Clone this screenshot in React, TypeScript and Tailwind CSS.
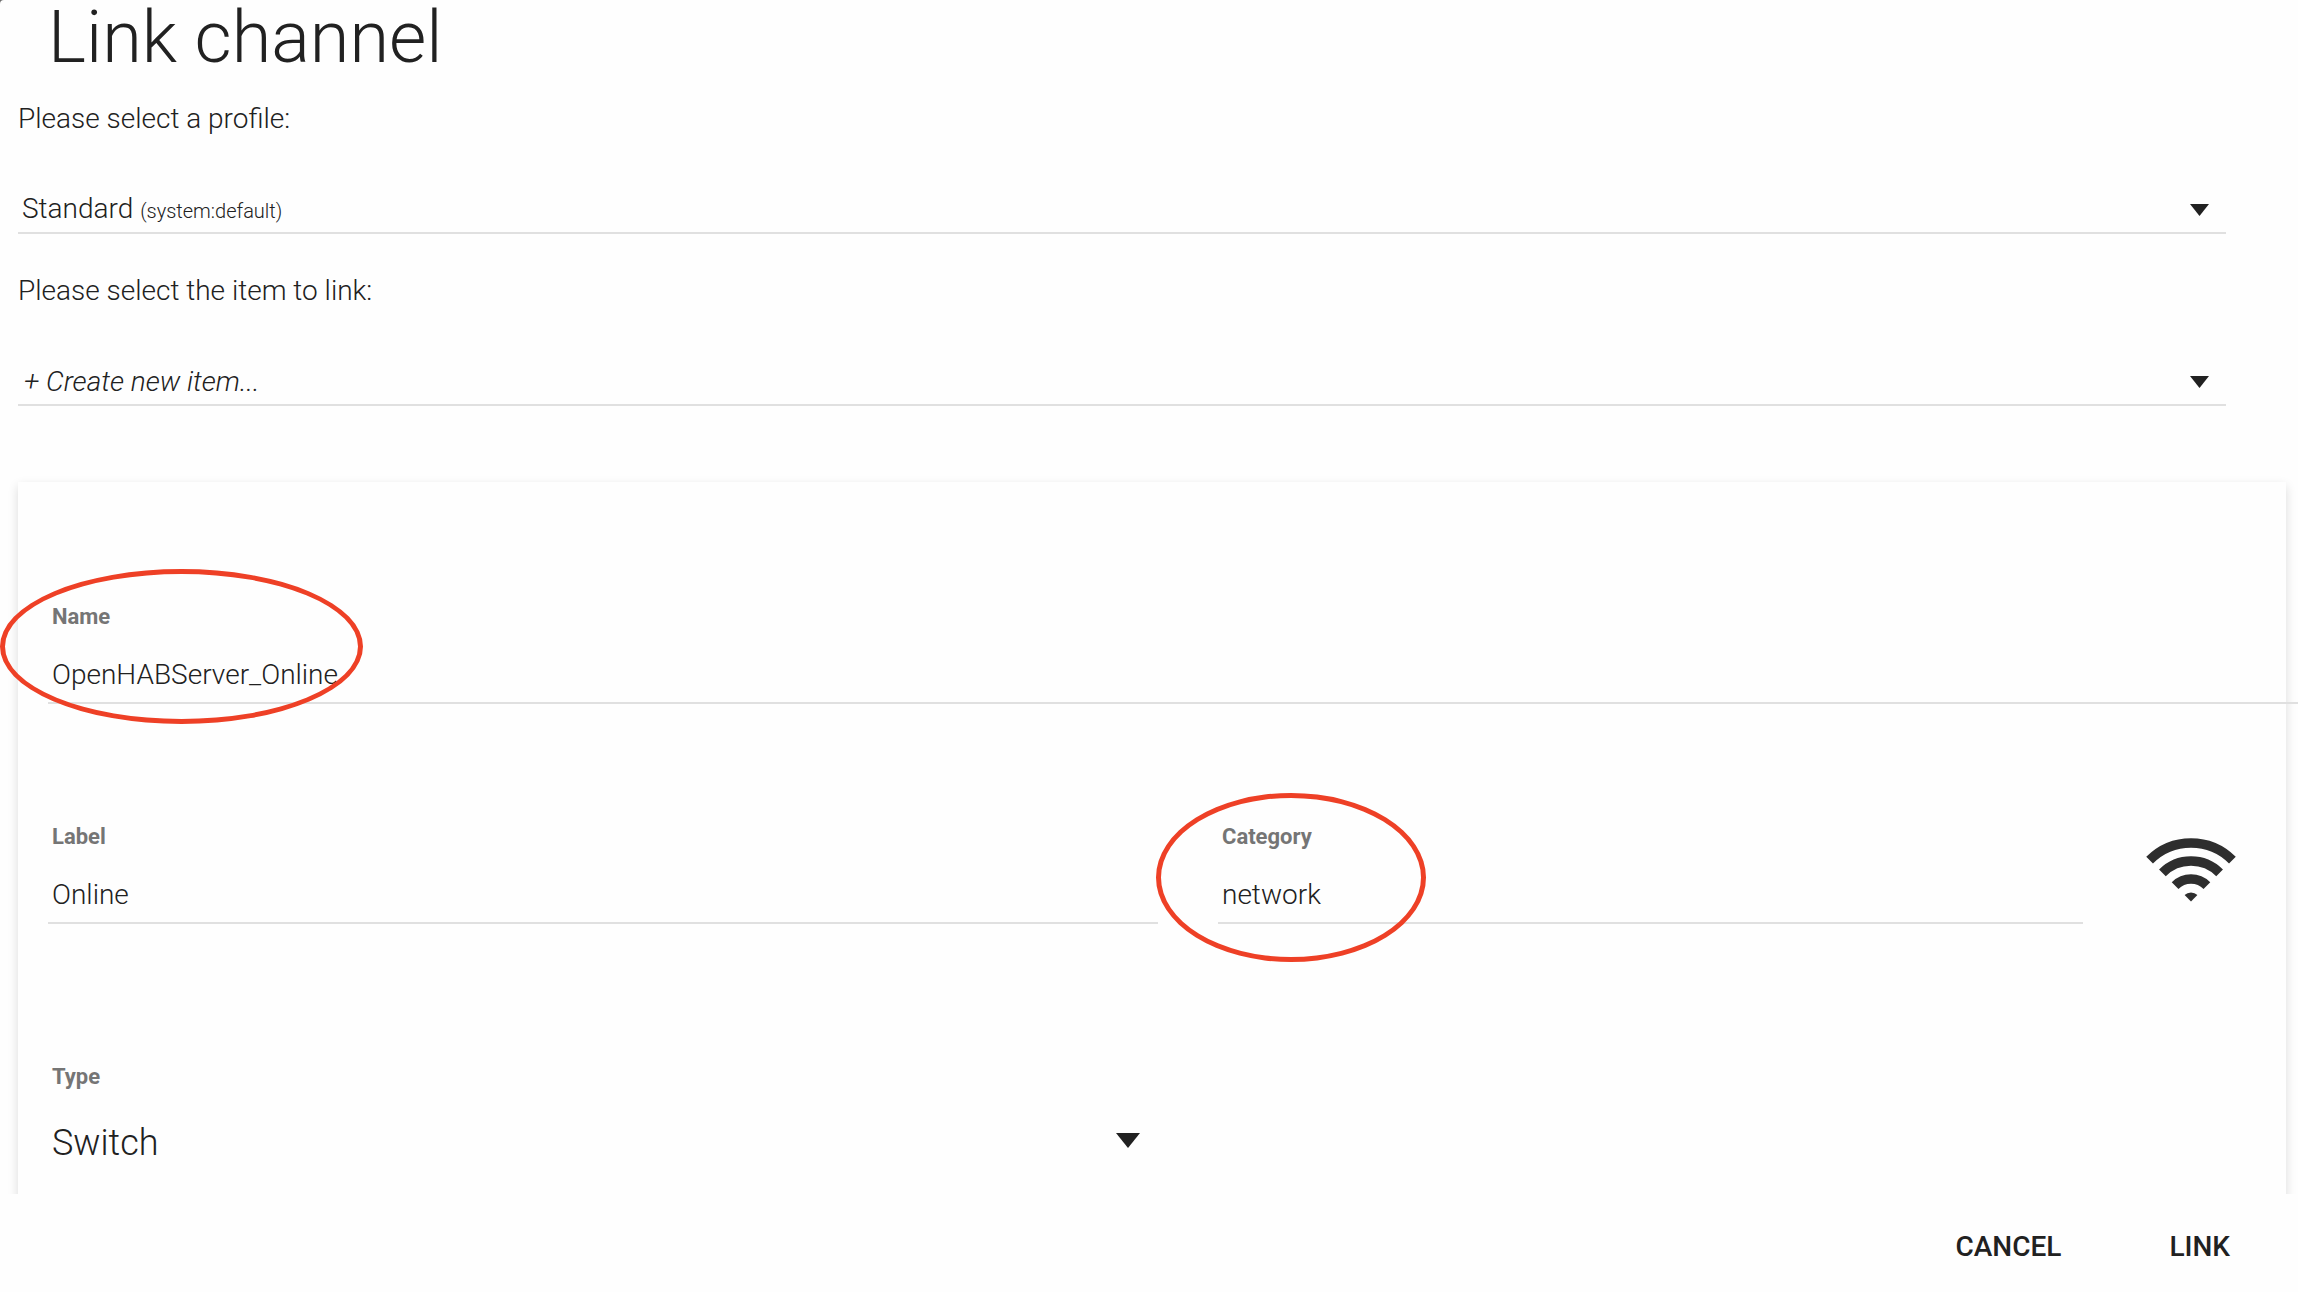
import React, { useState } from "react";
import clsx from "clsx";

const PROFILES = [
  { id: "system:default", label: "Standard" },
  { id: "system:follow", label: "Follow" },
  { id: "system:offset", label: "Offset" },
];

const ITEM_TYPES = ["Switch", "Contact", "String", "Number", "Dimmer"];

const Caret: React.FC<{ className?: string }> = ({ className }) => (
  <svg viewBox="0 0 24 15" aria-hidden="true" className={clsx("pointer-events-none", className)}>
    <path d="M0 0h24L12 15z" fill="#212121" />
  </svg>
);

const NetworkIcon = () => (
  <svg viewBox="0 0 90 64" aria-hidden="true" className="h-16 w-[90px]">
    <g fill="none" stroke="#2e2e2e" strokeWidth="9.5">
      <path d="M3.6 22.1A58.5 58.5 0 0 1 86.4 22.1" />
      <path d="M16.4 34.9A40.5 40.5 0 0 1 73.6 34.9" />
      <path d="M29.1 47.6A22.5 22.5 0 0 1 60.9 47.6" />
    </g>
    <path d="M45 63.5L38.6 57.1A9 9 0 0 1 51.4 57.1z" fill="#2e2e2e" />
  </svg>
);

// Hand-drawn style marker around a field
const Marker: React.FC<{ className: string }> = ({ className }) => (
  <div
    className={clsx(
      "pointer-events-none absolute rounded-[50%] border-5 border-[#ee4026]",
      className
    )}
  />
);

interface TextFieldProps {
  id: string;
  label: string;
  value: string;
  onChange: (value: string) => void;
  children?: React.ReactNode;
}

const TextField: React.FC<TextFieldProps> = ({ id, label, value, onChange, children }) => (
  <div className="relative">
    <label htmlFor={id} className="block pl-1 text-[22px] leading-[30px] font-bold text-[#757575]">
      {label}
    </label>
    <input
      id={id}
      type="text"
      value={value}
      onChange={(e) => onChange(e.target.value)}
      className="mt-3.5 block h-[58px] w-full border-b-2 border-[#e0e0e0] bg-transparent pl-1 text-[28px] font-light outline-none"
    />
    {children}
  </div>
);

const App: React.FC = () => {
  const [profile, setProfile] = useState(PROFILES[0].id);
  const [name, setName] = useState("OpenHABServer_Online");
  const [label, setLabel] = useState("Online");
  const [category, setCategory] = useState("network");
  const [type, setType] = useState(ITEM_TYPES[0]);

  const selected = PROFILES.find((p) => p.id === profile) ?? PROFILES[0];

  return (
    <div className="h-screen bg-[#6b6b6b] font-['Roboto',sans-serif] font-light text-[#212121]">
      <form
        className="flex h-full flex-col rounded-tl-sm bg-[#fefefe]"
        onSubmit={(e) => e.preventDefault()}
      >
        <h1 className="px-12 pt-0.5 text-[72px] leading-[72px]">Link channel</h1>

        <div className="min-h-0 flex-1 overflow-hidden pt-[25px]">
          <div className="mr-[72px] ml-[18px] text-[28px] leading-10">
            <label htmlFor="profile" className="block">
              Please select a profile:
            </label>
            <div className="relative mt-[39px] flex h-14 items-center justify-between border-b-2 border-[#e0e0e0] pt-2.5 pr-[17px] pl-1">
              <span>
                {selected.label} <span className="text-[20px]">({selected.id})</span>
              </span>
              <Caret className="h-3 w-[19px]" />
              <select
                id="profile"
                value={profile}
                onChange={(e) => setProfile(e.target.value)}
                className="absolute inset-0 w-full cursor-pointer opacity-0"
              >
                {PROFILES.map((p) => (
                  <option key={p.id} value={p.id}>
                    {p.label}
                  </option>
                ))}
              </select>
            </div>

            <label htmlFor="item" className="mt-[37px] block">
              Please select the item to link:
            </label>
            <div className="mt-[39px] grid h-14 items-center border-b-2 border-[#e0e0e0] pt-2.5">
              <select
                id="item"
                className="col-start-1 row-start-1 h-full w-full appearance-none pl-1.5 italic outline-none"
              >
                <option>+ Create new item...</option>
              </select>
              <Caret className="col-start-1 row-start-1 mr-[17px] h-3 w-[19px] justify-self-end" />
            </div>
          </div>

          <section className="mt-19 mr-3 ml-[18px] bg-[#fefefe] pt-[120px] pb-20 pl-[30px] shadow-[0_4px_10px_rgba(0,0,0,0.14)]">
            {/* the rows run past the card's right edge */}
            <div className="-mr-3">
              <TextField id="name" label="Name" value={name} onChange={setName}>
                <Marker className="-top-[33px] -left-12 h-[155px] w-[363px]" />
              </TextField>

              <div className="mt-[118px] grid grid-cols-[1110fr_865fr_155fr] gap-x-15">
                <TextField id="label" label="Label" value={label} onChange={setLabel} />
                <TextField id="category" label="Category" value={category} onChange={setCategory}>
                  <Marker className="-top-[29px] -left-[62px] h-[169px] w-[270px]" />
                </TextField>
                <div className="pt-4 pl-[3px]">
                  <NetworkIcon />
                </div>
              </div>

              <div className="mt-[138px] grid grid-cols-[1110fr_865fr_155fr] gap-x-15">
                <div>
                  <label
                    htmlFor="type"
                    className="block pl-1 text-[22px] leading-[30px] font-bold text-[#757575]"
                  >
                    Type
                  </label>
                  <div className="mt-3 grid items-center">
                    <select
                      id="type"
                      value={type}
                      onChange={(e) => setType(e.target.value)}
                      className="col-start-1 row-start-1 h-18 w-full appearance-none pt-1.5 pl-1 text-[36px] outline-none"
                    >
                      {ITEM_TYPES.map((t) => (
                        <option key={t}>{t}</option>
                      ))}
                    </select>
                    <Caret className="col-start-1 row-start-1 mr-[18px] h-[15px] w-6 justify-self-end" />
                  </div>
                </div>
              </div>
            </div>
          </section>
        </div>

        <footer className="flex h-[98px] shrink-0 items-center justify-end gap-9 pt-2 pr-8">
          <button type="button" className="h-18 px-9 text-[28px] font-medium uppercase">
            Cancel
          </button>
          <button type="submit" className="h-18 px-9 text-[28px] font-medium uppercase">
            Link
          </button>
        </footer>
      </form>
    </div>
  );
};

export default App;
